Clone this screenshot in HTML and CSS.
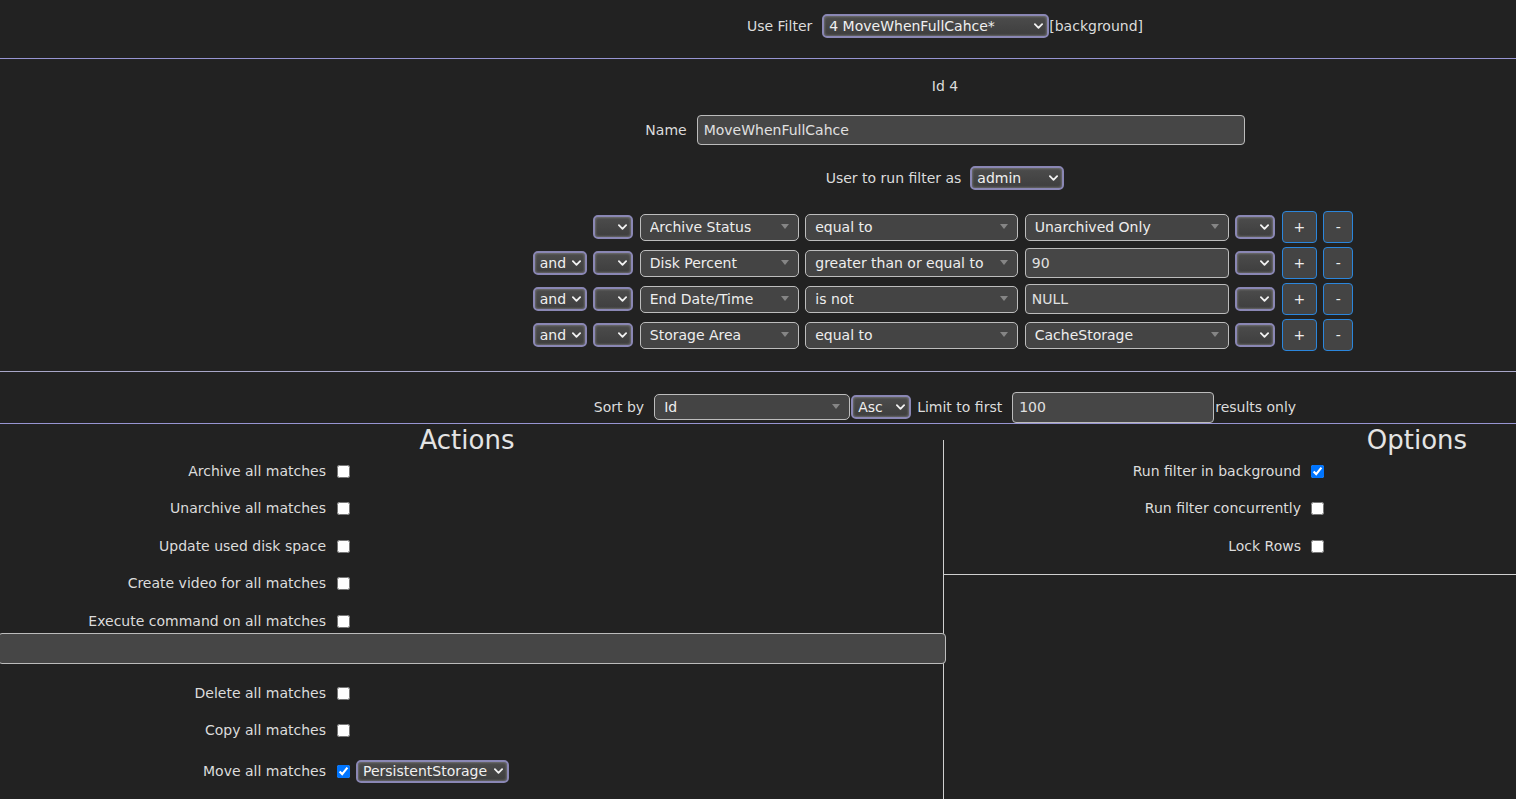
FILE: index.html
```html
<!DOCTYPE html>
<html lang="en">
<head>
<meta charset="utf-8">
<title>Filters</title>
<link rel="stylesheet" href="styles.css">
</head>
<body>
<div class="page">

  <header class="bar filter-bar">
    <label class="lbl gap10" for="usefilter">Use Filter</label>
    <span class="nsel w227"><select id="usefilter"><option>4 MoveWhenFullCahce*</option></select><svg class="chev" viewBox="0 0 10 6"><polyline points="1,1 5,5 9,1"/></svg></span>
    <span class="note">[background]</span>
  </header>

  <section class="editor">
    <div class="id-line">Id 4</div>
    <div class="bar name-row">
      <label class="lbl gap10" for="fname">Name</label>
      <input class="txt w548 h30" id="fname" value="MoveWhenFullCahce">
    </div>
    <div class="bar user-row">
      <label class="lbl gap9" for="runas">User to run filter as</label>
      <span class="nsel w94"><select id="runas"><option>admin</option></select><svg class="chev" viewBox="0 0 10 6"><polyline points="1,1 5,5 9,1"/></svg></span>
    </div>

    <div class="conds">
      <span></span>
      <span class="nsel"><select><option></option></select><svg class="chev" viewBox="0 0 10 6"><polyline points="1,1 5,5 9,1"/></svg></span>
      <span class="dsel"><select><option>Archive Status</option></select><svg class="tri" viewBox="0 0 8 5"><polygon points="0,0 8,0 4,5"/></svg></span>
      <span class="dsel"><select><option>equal to</option></select><svg class="tri" viewBox="0 0 8 5"><polygon points="0,0 8,0 4,5"/></svg></span>
      <span class="dsel"><select><option>Unarchived Only</option></select><svg class="tri" viewBox="0 0 8 5"><polygon points="0,0 8,0 4,5"/></svg></span>
      <span class="nsel"><select><option></option></select><svg class="chev" viewBox="0 0 10 6"><polyline points="1,1 5,5 9,1"/></svg></span>
      <button class="pm">+</button>
      <button class="pm">-</button>

      <span class="nsel"><select><option>and</option></select><svg class="chev" viewBox="0 0 10 6"><polyline points="1,1 5,5 9,1"/></svg></span>
      <span class="nsel"><select><option></option></select><svg class="chev" viewBox="0 0 10 6"><polyline points="1,1 5,5 9,1"/></svg></span>
      <span class="dsel"><select><option>Disk Percent</option></select><svg class="tri" viewBox="0 0 8 5"><polygon points="0,0 8,0 4,5"/></svg></span>
      <span class="dsel"><select><option>greater than or equal to</option></select><svg class="tri" viewBox="0 0 8 5"><polygon points="0,0 8,0 4,5"/></svg></span>
      <input class="txt val" value="90">
      <span class="nsel"><select><option></option></select><svg class="chev" viewBox="0 0 10 6"><polyline points="1,1 5,5 9,1"/></svg></span>
      <button class="pm">+</button>
      <button class="pm">-</button>

      <span class="nsel"><select><option>and</option></select><svg class="chev" viewBox="0 0 10 6"><polyline points="1,1 5,5 9,1"/></svg></span>
      <span class="nsel"><select><option></option></select><svg class="chev" viewBox="0 0 10 6"><polyline points="1,1 5,5 9,1"/></svg></span>
      <span class="dsel"><select><option>End Date/Time</option></select><svg class="tri" viewBox="0 0 8 5"><polygon points="0,0 8,0 4,5"/></svg></span>
      <span class="dsel"><select><option>is not</option></select><svg class="tri" viewBox="0 0 8 5"><polygon points="0,0 8,0 4,5"/></svg></span>
      <input class="txt val" value="NULL">
      <span class="nsel"><select><option></option></select><svg class="chev" viewBox="0 0 10 6"><polyline points="1,1 5,5 9,1"/></svg></span>
      <button class="pm">+</button>
      <button class="pm">-</button>

      <span class="nsel"><select><option>and</option></select><svg class="chev" viewBox="0 0 10 6"><polyline points="1,1 5,5 9,1"/></svg></span>
      <span class="nsel"><select><option></option></select><svg class="chev" viewBox="0 0 10 6"><polyline points="1,1 5,5 9,1"/></svg></span>
      <span class="dsel"><select><option>Storage Area</option></select><svg class="tri" viewBox="0 0 8 5"><polygon points="0,0 8,0 4,5"/></svg></span>
      <span class="dsel"><select><option>equal to</option></select><svg class="tri" viewBox="0 0 8 5"><polygon points="0,0 8,0 4,5"/></svg></span>
      <span class="dsel"><select><option>CacheStorage</option></select><svg class="tri" viewBox="0 0 8 5"><polygon points="0,0 8,0 4,5"/></svg></span>
      <span class="nsel"><select><option></option></select><svg class="chev" viewBox="0 0 10 6"><polyline points="1,1 5,5 9,1"/></svg></span>
      <button class="pm">+</button>
      <button class="pm">-</button>
    </div>
  </section>

  <section class="bar sort-bar">
    <label class="lbl gap10" for="sortby">Sort by</label>
    <span class="dsel w196"><select id="sortby"><option>Id</option></select><svg class="tri" viewBox="0 0 8 5"><polygon points="0,0 8,0 4,5"/></svg></span>
    <span class="nsel w60 gapl1"><select><option>Asc</option></select><svg class="chev" viewBox="0 0 10 6"><polyline points="1,1 5,5 9,1"/></svg></span>
    <label class="lbl gapl6 gap10" for="limit">Limit to first</label>
    <input class="txt w202 h31" id="limit" value="100">
    <span class="gapl1">results only</span>
  </section>

  <div class="panels">
    <section class="panel actions">
      <h2>Actions</h2>
      <div class="opt"><label for="a1">Archive all matches</label><input type="checkbox" id="a1"></div>
      <div class="opt"><label for="a2">Unarchive all matches</label><input type="checkbox" id="a2"></div>
      <div class="opt"><label for="a3">Update used disk space</label><input type="checkbox" id="a3"></div>
      <div class="opt"><label for="a4">Create video for all matches</label><input type="checkbox" id="a4"></div>
      <div class="opt tight"><label for="a5">Execute command on all matches</label><input type="checkbox" id="a5"></div>
      <input class="txt cmd" aria-label="Command">
      <div class="opt"><label for="a6">Delete all matches</label><input type="checkbox" id="a6"></div>
      <div class="opt"><label for="a7">Copy all matches</label><input type="checkbox" id="a7"></div>
      <div class="opt tall"><label for="a8">Move all matches</label><input type="checkbox" id="a8" checked>
        <span class="nsel w153 h23 gapl6"><select><option>PersistentStorage</option></select><svg class="chev" viewBox="0 0 10 6"><polyline points="1,1 5,5 9,1"/></svg></span>
      </div>
    </section>
    <section class="panel options">
      <h2>Options</h2>
      <div class="opt"><label for="o1">Run filter in background</label><input type="checkbox" id="o1" checked></div>
      <div class="opt"><label for="o2">Run filter concurrently</label><input type="checkbox" id="o2"></div>
      <div class="opt last"><label for="o3">Lock Rows</label><input type="checkbox" id="o3"></div>
    </section>
  </div>

</div>
</body>
</html>
```

FILE: styles.css
```css
html, body {
  margin: 0;
  padding: 0;
  background: #222222;
  overflow: hidden;
}

body {
  font-family: "DejaVu Sans", Verdana, sans-serif;
  font-size: 14px;
  color: #dcdcdc;
}

.page {
  width: 1890px;
}

.bar {
  display: flex;
  justify-content: center;
  align-items: center;
}

.lbl { line-height: 17px; }
.gap9 { margin-right: 9px; }
.gap10 { margin-right: 10px; }
.gapl1 { margin-left: 1px; }
.gapl6 { margin-left: 6px; }

/* top bar */
.filter-bar {
  height: 24px;
  padding: 14px 0 20px;
  border-bottom: 1px solid #9795d2;
}

.note { line-height: 17px; }

/* editor */
.editor {
  display: flex;
  flex-direction: column;
  align-items: center;
  padding: 18.5px 0 20px;
  border-bottom: 1px solid #a9a7c9;
}

.id-line {
  line-height: 17px;
  height: 17px;
}

.name-row { margin-top: 20.5px; height: 30px; }
.user-row { margin-top: 21px; height: 24px; }

/* native-looking selects */
.nsel {
  position: relative;
  display: inline-flex;
  height: 24px;
}

.nsel select {
  -webkit-appearance: none;
  appearance: none;
  box-sizing: border-box;
  width: 100%;
  height: 100%;
  margin: 0;
  padding: 0 18px 0 5px;
  font: inherit;
  color: #f0f0f0;
  background: linear-gradient(#4c4c4c, #3e3e3e);
  border: 2px solid #8a87b4;
  border-radius: 5px;
  box-shadow: inset 0 0 2px 1px rgba(150, 150, 150, 0.45);
}

.chev {
  position: absolute;
  right: 6px;
  top: 50%;
  width: 9px;
  height: 6px;
  margin-top: -3px;
  pointer-events: none;
  fill: none;
  stroke: #f2f2f2;
  stroke-width: 2;
  stroke-linecap: round;
  stroke-linejoin: round;
}

.w227 { width: 227px; }
.w94 { width: 94px; }
.w60 { width: 60px; }
.w153 { width: 153px; }
.h23 { height: 23px; }

/* dark custom dropdowns */
.dsel {
  position: relative;
  display: inline-flex;
  height: 27px;
}

.dsel select {
  -webkit-appearance: none;
  appearance: none;
  box-sizing: border-box;
  width: 100%;
  height: 100%;
  margin: 0;
  padding: 0 24px 0 9px;
  font: inherit;
  color: #eeeeee;
  background: #444444;
  border: 1px solid #bdbdbd;
  border-radius: 5px;
}

.tri {
  position: absolute;
  right: 10px;
  top: 50%;
  width: 8px;
  height: 5px;
  margin-top: -3px;
  fill: #858585;
  pointer-events: none;
}

.w196 { width: 196px; height: 26px; }

/* text inputs */
.txt {
  box-sizing: border-box;
  margin: 0;
  padding: 0 6px;
  font: inherit;
  color: #e0e0e0;
  background: #464646;
  border: 1px solid #bcbcbc;
  border-radius: 4px;
}

.w548 { width: 548px; }
.w202 { width: 202px; }
.h30 { height: 30px; }
.h31 { height: 31px; }

/* conditions grid */
.conds {
  margin-top: 21px;
  margin-right: 4px;
  display: grid;
  grid-template-columns: 54px 40px 159px 213px 204px 40px 35px 30px;
  grid-auto-rows: 32px;
  column-gap: 6.5px;
  row-gap: 4px;
  align-items: center;
}

.conds .nsel,
.conds .dsel { width: 100%; }

.conds .val {
  width: 100%;
  height: 30px;
}

.pm {
  width: 100%;
  height: 32px;
  margin: 0;
  padding: 0;
  font: inherit;
  color: #eeeeee;
  background: #444444;
  border: 1px solid #2b86dc;
  border-radius: 4px;
}

/* sort bar */
.sort-bar {
  height: 32px;
  padding-top: 19px;
  border-bottom: 1px solid #9795d2;
}

/* panels */
.panels {
  display: flex;
  align-items: flex-start;
  padding-top: 16px;
}

.panel {
  display: flex;
  flex-direction: column;
  box-sizing: border-box;
}

.panel h2 {
  margin: -15px 0 7.5px;
  font-size: 26px;
  font-weight: normal;
  line-height: 30px;
  text-align: center;
  color: #e4e4e4;
}

.actions {
  width: 944px;
  padding-bottom: 60px;
  border-right: 1px solid #cfcfcf;
}

.actions h2 { padding-right: 9px; }

.options {
  width: 946px;
  border-bottom: 1px solid #cfcfcf;
}

.opt {
  display: flex;
  align-items: center;
  height: 17px;
  margin-bottom: 20.5px;
  line-height: 17px;
}

.opt label {
  flex: none;
  text-align: right;
}

.actions .opt label { width: 326px; }
.options .opt label { width: 357px; }

.opt input[type="checkbox"] {
  flex: none;
  width: 13px;
  height: 13px;
  margin: 0 0 0 11px;
}

.options .opt input[type="checkbox"] { margin-left: 10px; }

.opt.tight { margin-bottom: 3.5px; }
.opt.tall { height: 23px; }
.opt.last { margin-bottom: 19.5px; }

.cmd {
  display: block;
  width: 948px;
  height: 31px;
  margin: 0 0 20.5px -2px;
}
```
